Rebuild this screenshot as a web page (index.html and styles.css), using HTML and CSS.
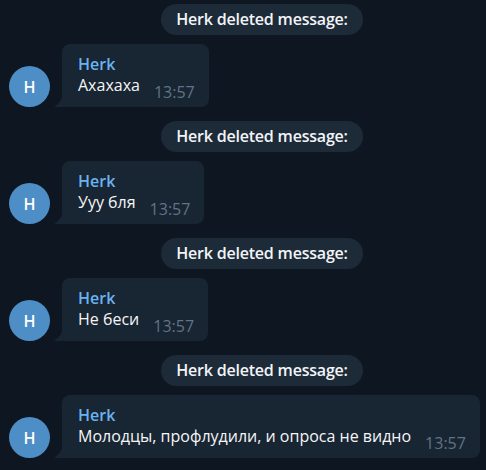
FILE: index.html
```html
<!DOCTYPE html>
<html>
<head>
<meta charset="utf-8">
<link rel="stylesheet" href="styles.css">
</head>
<body>
<div class="chat">
  <div class="service"><span class="pill">Herk deleted message:</span></div>
  <div class="msg">
    <div class="avatar">H</div>
    <div class="bubble">
      <svg class="tail" width="9" height="17" viewBox="0 0 9 17"><path d="M9 0 C9 8 6 13 1 16 Q0 17 1.5 17 H9 Z"/></svg>
      <div class="name">Herk</div>
      <div class="row"><span class="text">Ахахаха</span><span class="time">13:57</span></div>
    </div>
  </div>

  <div class="service"><span class="pill">Herk deleted message:</span></div>
  <div class="msg">
    <div class="avatar">H</div>
    <div class="bubble">
      <svg class="tail" width="9" height="17" viewBox="0 0 9 17"><path d="M9 0 C9 8 6 13 1 16 Q0 17 1.5 17 H9 Z"/></svg>
      <div class="name">Herk</div>
      <div class="row"><span class="text">Ууу бля</span><span class="time">13:57</span></div>
    </div>
  </div>

  <div class="service"><span class="pill">Herk deleted message:</span></div>
  <div class="msg">
    <div class="avatar">H</div>
    <div class="bubble">
      <svg class="tail" width="9" height="17" viewBox="0 0 9 17"><path d="M9 0 C9 8 6 13 1 16 Q0 17 1.5 17 H9 Z"/></svg>
      <div class="name">Herk</div>
      <div class="row"><span class="text">Не беси</span><span class="time">13:57</span></div>
    </div>
  </div>

  <div class="service"><span class="pill">Herk deleted message:</span></div>
  <div class="msg">
    <div class="avatar">H</div>
    <div class="bubble">
      <svg class="tail" width="9" height="17" viewBox="0 0 9 17"><path d="M9 0 C9 8 6 13 1 16 Q0 17 1.5 17 H9 Z"/></svg>
      <div class="name">Herk</div>
      <div class="row"><span class="text">Молодцы, профлудили, и опроса не видно</span><span class="time">13:57</span></div>
    </div>
  </div>
</div>
</body>
</html>
```

FILE: styles.css
```css
html, body {
  margin: 0;
  padding: 0;
  background: #0e1621;
  height: 100%;
}
body {
  font-family: "Open Sans", "Noto Sans", sans-serif;
  color: #f5f5f5;
  overflow: hidden;
}
.chat {
  display: flex;
  flex-direction: column;
  padding-top: 4px;
}
.service {
  display: flex;
  justify-content: center;
  padding-left: 38px;
  margin-bottom: 9px;
}
.pill {
  display: block;
  height: 31px;
  line-height: 30px;
  padding: 0 15px;
  border-radius: 16px;
  background: #1d2a38;
  font-size: 16px;
  font-weight: 600;
  letter-spacing: -0.2px;
  color: #f2f4f7;
}
.msg {
  display: flex;
  align-items: flex-end;
  padding-left: 9px;
  gap: 12px;
  margin-bottom: 14px;
}
.avatar {
  width: 41px;
  height: 41px;
  border-radius: 50%;
  background: #4e8ec6;
  color: #fff;
  font-size: 16px;
  font-weight: 600;
  display: flex;
  align-items: center;
  justify-content: center;
  flex-shrink: 0;
}
.bubble {
  position: relative;
  background: #182533;
  border-radius: 8px 8px 8px 0;
  padding: 10px 14px 11px 16px;
}
.tail {
  position: absolute;
  left: -8px;
  bottom: 0;
  fill: #182533;
}
.name {
  font-size: 16px;
  font-weight: 600;
  line-height: 20px;
  color: #6ab3f3;
}
.row {
  display: flex;
  align-items: flex-end;
}
.text {
  font-size: 16px;
  line-height: 22px;
  color: #f5f5f5;
}
.time {
  font-size: 16px;
  line-height: 16px;
  margin-left: 14px;
  margin-bottom: -4px;
  color: #627386;
}
```
